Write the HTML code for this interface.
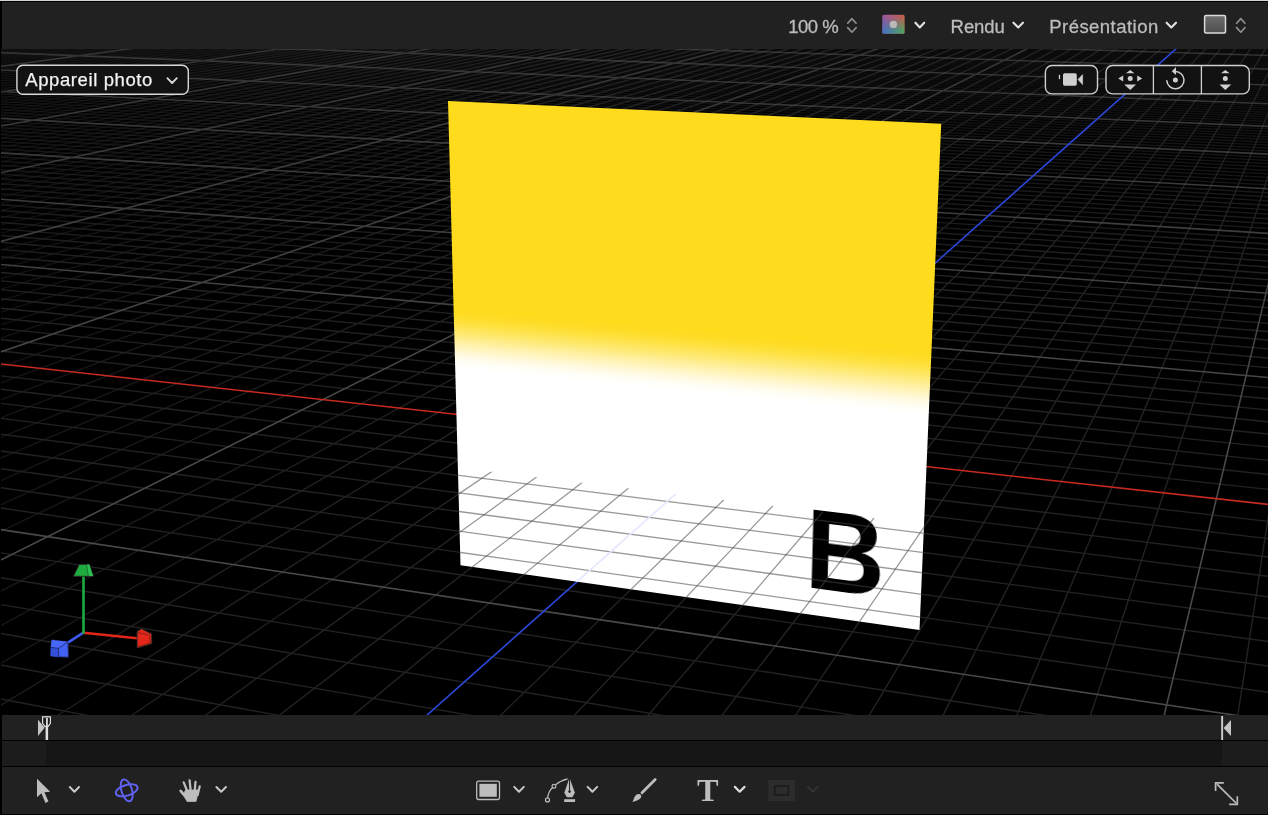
<!DOCTYPE html>
<html><head><meta charset="utf-8">
<style>
html,body{margin:0;padding:0;}
body{width:1269px;height:817px;background:#fff;overflow:hidden;position:relative;font-family:"Liberation Sans",sans-serif;}
#app{position:absolute;left:0;top:0;width:1268px;height:815px;background:#000;overflow:hidden;}
#topline{position:absolute;left:0;top:0;width:1268px;height:1px;background:#d4d4d4;}
#topbar{position:absolute;left:1.5px;top:2px;width:1266.5px;height:47px;background:#212121;}
#canvas{position:absolute;left:1px;top:49px;width:1267px;height:666px;background:#000;overflow:hidden;}
#tl1{position:absolute;left:1.5px;top:715px;width:1266.5px;height:25px;background:#212121;}
#tl2{position:absolute;left:1.5px;top:741px;width:1266.5px;height:25px;background:#1c1c1c;}
#tl2 i{position:absolute;left:44.5px;top:0;width:1176px;height:25px;background:#161616;display:block;}
#tools{position:absolute;left:1.5px;top:767px;width:1266.5px;height:46.5px;background:#212121;}
svg{position:absolute;left:0;top:0;overflow:visible;}
.txt{position:absolute;color:#bdbdbd;font-size:18px;line-height:20px;white-space:nowrap;}
#card{position:absolute;left:0;top:0;width:500px;height:500px;transform-origin:0 0;transform:matrix3d(0.81333388,0.022635884,0,-0.00018387815,0.089620334,1.0077265,0,0.00014032646,0,0,1,0,448,101.1,0,1);
 background:linear-gradient(to bottom,#fedb1c 0,#fedb1c 42.80%,#fedc25 44.38%,#fee13f 46.10%,#fee86c 48.08%,#feed8e 49.40%,#fff2af 50.72%,#fff9dc 52.70%,#fffef6 54.42%,#ffffff 56.00%,#fff 100%);}
#card b{position:absolute;left:382.2px;top:364.6px;font-size:120.6px;line-height:130px;font-weight:bold;color:#000;transform-origin:0 0;transform:scaleX(0.936);}
.btn{position:absolute;box-sizing:border-box;border:1.5px solid #d0d0d0;border-radius:6px;background:#121212;}
</style></head><body>
<div id="app">
<div id="topline"></div>
<div id="topbar"></div>
<div id="canvas">
 <svg width="1267" height="666" viewBox="1 49 1267 666">
  <defs>
   <linearGradient id="fade" x1="0" y1="49" x2="0" y2="715" gradientUnits="userSpaceOnUse">
    <stop offset="0" stop-color="#fff" stop-opacity="0.3"/>
    <stop offset="0.12" stop-color="#fff" stop-opacity="0.55"/>
    <stop offset="0.35" stop-color="#fff" stop-opacity="1"/>
   </linearGradient>
   <mask id="fm" maskUnits="userSpaceOnUse" x="0" y="40" width="1270" height="690"><rect x="0" y="40" width="1270" height="690" fill="url(#fade)"/></mask>
   <linearGradient id="fade2" x1="0" y1="49" x2="0" y2="715" gradientUnits="userSpaceOnUse">
    <stop offset="0" stop-color="#fff" stop-opacity="0.68"/>
    <stop offset="0.55" stop-color="#fff" stop-opacity="1"/>
   </linearGradient>
   <mask id="fm2" maskUnits="userSpaceOnUse" x="0" y="40" width="1270" height="690"><rect x="0" y="40" width="1270" height="690" fill="url(#fade2)"/></mask>
   <linearGradient id="fade3" x1="0" y1="49" x2="700" y2="400" gradientUnits="userSpaceOnUse">
    <stop offset="0" stop-color="#fff" stop-opacity="0.3"/>
    <stop offset="0.35" stop-color="#fff" stop-opacity="0.7"/>
    <stop offset="0.7" stop-color="#fff" stop-opacity="1"/>
   </linearGradient>
   <mask id="fm3" maskUnits="userSpaceOnUse" x="0" y="40" width="1270" height="690"><rect x="0" y="40" width="1270" height="690" fill="url(#fade3)"/></mask>
   <clipPath id="cc"><polygon points="457.9,467.6 924.0,524.0 919.5,630.0 460.5,565.3"/></clipPath>
  </defs>
  <g fill="none" stroke-width="1">
   <g mask="url(#fm)" stroke="#222222" stroke-width="1.4"><path id="gmink" d="M1268.4 46.0L1270.0 46.0M1230.9 46.0L1270.0 47.2M1193.4 46.0L1270.0 48.3M1155.9 46.0L1270.0 49.5M1118.4 46.0L1270.0 50.7M1080.9 46.0L1270.0 51.9M1043.4 46.0L1270.0 53.1M1005.8 46.0L1270.0 54.3M930.7 46.0L1270.0 56.9M893.2 46.0L1270.0 58.2M855.6 46.0L1270.0 59.5M818.0 46.0L1270.0 60.8M780.4 46.0L1270.0 62.1M742.8 46.0L1270.0 63.5M705.2 46.0L1270.0 64.9M667.6 46.0L1270.0 66.3M630.0 46.0L1270.0 67.7M554.7 46.0L1270.0 70.7M517.1 46.0L1270.0 72.2M479.4 46.0L1270.0 73.7M441.8 46.0L1270.0 75.2M404.1 46.0L1270.0 76.8M366.4 46.0L1270.0 78.4M328.7 46.0L1270.0 80.0M291.0 46.0L1270.0 81.7M253.3 46.0L1270.0 83.4M177.8 46.0L1270.0 86.8M140.1 46.0L1270.0 88.6M102.4 46.0L1270.0 90.4M64.6 46.0L1270.0 92.2M26.8 46.0L1270.0 94.1M-2.0 46.3L1270.0 96.0M-2.0 47.8L1270.0 97.9M-2.0 49.4L1270.0 99.9M-2.0 50.9L1270.0 101.9M-2.0 54.1L1270.0 106.0M-2.0 55.7L1270.0 108.1M-2.0 57.4L1270.0 110.2M-2.0 59.1L1270.0 112.4M-2.0 60.8L1270.0 114.6M-2.0 62.5L1270.0 116.9M-2.0 64.3L1270.0 119.2M-2.0 66.2L1270.0 121.6M-2.0 68.0L1270.0 124.0M-2.0 71.9L1270.0 129.0M-2.0 73.9L1270.0 131.6M-2.0 75.9L1270.0 134.2M-2.0 78.0L1270.0 136.9M-2.0 80.1L1270.0 139.6M-2.0 82.2L1270.0 142.4M-2.0 84.4L1270.0 145.2M-2.0 86.7L1270.0 148.1M-2.0 89.0L1270.0 151.1M-2.0 93.8L1270.0 157.3M-2.0 96.2L1270.0 160.5M-2.0 98.7L1270.0 163.7M-2.0 101.3L1270.0 167.0M-2.0 104.0L1270.0 170.5M-2.0 106.7L1270.0 174.0M-2.0 109.4L1270.0 177.5M-2.0 112.3L1270.0 181.2M-2.0 115.2L1270.0 185.0M-2.0 121.2L1270.0 192.8M-2.0 124.4L1270.0 196.8M-2.0 127.6L1270.0 201.0M-2.0 130.9L1270.0 205.3M-2.0 134.3L1270.0 209.7M-2.0 137.8L1270.0 214.2M-2.0 141.4L1270.0 218.8M-2.0 145.0L1270.0 223.6M-2.0 148.8L1270.0 228.5M-2.0 156.8L1270.0 238.7M-2.0 160.9L1270.0 244.1M-2.0 165.2L1270.0 249.6M-2.0 169.5L1270.0 255.3M-2.0 174.1L1270.0 261.1M-2.0 178.8L1270.0 267.2M-2.0 183.6L1270.0 273.4M-2.0 188.6L1270.0 279.9M-2.0 193.7L1270.0 286.5M-2.0 204.5L1270.0 300.5M-2.0 210.2L1270.0 307.9M-2.0 216.1L1270.0 315.5M-2.0 222.3L1270.0 323.5M-2.0 228.6L1270.0 331.7M-2.0 235.2L1270.0 340.2M-2.0 242.0L1270.0 349.0M-2.0 249.1L1270.0 358.2M-2.0 256.5L1270.0 367.8M-2.0 272.2L1270.0 388.1M-2.0 280.6L1270.0 398.9M-2.0 289.3L1270.0 410.1M-2.0 298.4L1270.0 421.9M-2.0 307.9L1270.0 434.2M-2.0 317.9L1270.0 447.1M-2.0 328.3L1270.0 460.6M-2.0 339.2L1270.0 474.7M-2.0 350.7L1270.0 489.6M-2.0 375.5L1270.0 521.6M-2.0 388.9L1270.0 538.9M-2.0 403.0L1270.0 557.2M-2.0 418.0L1270.0 576.5M-2.0 433.8L1270.0 597.0M-2.0 450.6L1270.0 618.7M-2.0 468.4L1270.0 641.7M-2.0 487.4L1270.0 666.3M-2.0 507.6L1270.0 692.5M-2.0 552.4L1061.8 718.0M-2.0 577.3L869.8 718.0M-2.0 604.1L677.7 718.0M-2.0 633.0L485.6 718.0M-2.0 664.4L293.4 718.0M-2.0 698.5L101.2 718.0"/></g>
   <g mask="url(#fm3)" stroke="#232323" stroke-width="1.4"><path id="gmin" d="M17.5 46.0L-2.0 48.4M32.3 46.0L-2.0 50.3M47.0 46.0L-2.0 52.2M61.8 46.0L-2.0 54.1M76.6 46.0L-2.0 56.1M91.3 46.0L-2.0 58.1M106.1 46.0L-2.0 60.2M120.8 46.0L-2.0 62.4M135.6 46.0L-2.0 64.5M165.0 46.0L-2.0 69.1M179.8 46.0L-2.0 71.4M194.5 46.0L-2.0 73.8M209.3 46.0L-2.0 76.3M224.0 46.0L-2.0 78.8M238.8 46.0L-2.0 81.4M253.5 46.0L-2.0 84.1M268.2 46.0L-2.0 86.8M283.0 46.0L-2.0 89.7M312.4 46.0L-2.0 95.5M327.2 46.0L-2.0 98.6M341.9 46.0L-2.0 101.7M356.6 46.0L-2.0 104.9M371.3 46.0L-2.0 108.3M386.1 46.0L-2.0 111.7M400.8 46.0L-2.0 115.2M415.5 46.0L-2.0 118.9M430.2 46.0L-2.0 122.6M459.7 46.0L-2.0 130.5M474.4 46.0L-2.0 134.7M489.1 46.0L-2.0 138.9M503.8 46.0L-2.0 143.3M518.5 46.0L-2.0 147.9M533.2 46.0L-2.0 152.7M547.9 46.0L-2.0 157.6M562.7 46.0L-2.0 162.6M577.4 46.0L-2.0 167.9M606.8 46.0L-2.0 179.1M621.5 46.0L-2.0 185.0M636.2 46.0L-2.0 191.1M650.9 46.0L-2.0 197.5M665.6 46.0L-2.0 204.2M680.3 46.0L-2.0 211.1M695.0 46.0L-2.0 218.4M709.7 46.0L-2.0 225.9M724.4 46.0L-2.0 233.9M753.7 46.0L-2.0 250.9M768.4 46.0L-2.0 260.0M783.1 46.0L-2.0 269.6M797.8 46.0L-2.0 279.6M812.5 46.0L-2.0 290.2M827.2 46.0L-2.0 301.4M841.8 46.0L-2.0 313.2M856.5 46.0L-2.0 325.7M871.2 46.0L-2.0 338.9M900.6 46.0L-2.0 367.9M915.2 46.0L-2.0 383.8M929.9 46.0L-2.0 400.8M944.6 46.0L-2.0 418.9M959.3 46.0L-2.0 438.4M973.9 46.0L-2.0 459.3M988.6 46.0L-2.0 481.8M1003.3 46.0L-2.0 506.2M1017.9 46.0L-2.0 532.6M1047.3 46.0L-2.0 592.7M1061.9 46.0L-2.0 627.1M1076.6 46.0L-2.0 665.0M1091.2 46.0L-2.0 706.9M1105.9 46.0L53.7 718.0M1120.5 46.0L127.7 718.0M1135.2 46.0L201.7 718.0M1149.9 46.0L275.8 718.0M1164.5 46.0L349.8 718.0M1193.8 46.0L497.8 718.0M1208.5 46.0L571.8 718.0M1223.1 46.0L645.8 718.0M1237.7 46.0L719.8 718.0M1252.4 46.0L793.7 718.0M1267.0 46.0L867.7 718.0M1270.0 69.1L941.7 718.0M1270.0 109.0L1015.6 718.0M1270.0 170.3L1089.6 718.0M1270.0 505.2L1237.4 718.0"/></g>
   <g mask="url(#fm2)" stroke="#4a4a4a" stroke-width="1.6"><path id="gmaj" d="M968.3 46.0L1270.0 55.6M592.4 46.0L1270.0 69.2M215.6 46.0L1270.0 85.1M-2.0 52.5L1270.0 103.9M-2.0 69.9L1270.0 126.5M-2.0 91.3L1270.0 154.2M-2.0 118.2L1270.0 188.8M-2.0 152.7L1270.0 233.5M-2.0 199.0L1270.0 293.4M-2.0 264.2L1270.0 377.7M-2.0 529.2L1253.8 718.0M2.8 46.0L-2.0 46.6M150.3 46.0L-2.0 66.8M297.7 46.0L-2.0 92.5M444.9 46.0L-2.0 126.5M592.1 46.0L-2.0 173.4M739.0 46.0L-2.0 242.2M885.9 46.0L-2.0 353.0M1032.6 46.0L-2.0 561.3M1270.0 276.5L1163.5 718.0"/></g>
   <path d="M-2 363.6L1270 504.6" stroke="#c62a20" stroke-width="1.5"/>
   <path d="M1179.2 46.0L423.8 718.0" stroke="#2c46d8" stroke-width="1.6"/>
  </g>
 </svg>
 <div style="position:absolute;left:-1px;top:-49px;width:0;height:0;">
  <div id="card"><b>B</b></div>
 </div>
 <svg width="1267" height="666" viewBox="1 49 1267 666">
  <g fill="none" stroke-width="1.3" clip-path="url(#cc)" stroke="#464646" stroke-opacity="0.55">
   <use href="#gmin"/><use href="#gmink"/>
   <use href="#gmaj"/>
   <path d="M1179.2 46.0L423.8 718.0" stroke="#e4e6ff" stroke-width="1.6" stroke-opacity="1"/>
  </g>
 </svg>
</div>
<div id="tl1"></div>
<div id="tl2"><i></i></div>
<div id="tools"></div>
<svg width="1268" height="815" viewBox="0 0 1268 815" style="position:absolute;left:0;top:0" font-family="Liberation Sans, sans-serif">
<defs>
<linearGradient id="swT" x1="0" y1="0" x2="1" y2="0"><stop offset="0" stop-color="#97589f"/><stop offset="1" stop-color="#c4604a"/></linearGradient>
<linearGradient id="swB" x1="0" y1="0" x2="1" y2="0"><stop offset="0" stop-color="#4070c4"/><stop offset="1" stop-color="#4ba85e"/></linearGradient>
<linearGradient id="swM" x1="0" y1="0" x2="0" y2="1"><stop offset="0.1" stop-color="#fff" stop-opacity="0"/><stop offset="0.9" stop-color="#fff" stop-opacity="1"/></linearGradient>
<mask id="swMask" maskContentUnits="objectBoundingBox"><rect x="0" y="0" width="1" height="1" fill="url(#swM)"/></mask>
<linearGradient id="sqG" x1="0" y1="0" x2="0" y2="1"><stop offset="0" stop-color="#6e6e6e"/><stop offset="1" stop-color="#4e4e4e"/></linearGradient>
</defs>
<text x="788.2" y="32.8" font-size="18.5" fill="#bcbcbc" stroke="#bcbcbc" stroke-width="0.3" textLength="50.6" lengthAdjust="spacing">100 %</text>
<polyline points="847.70,23.20 851.90,18.60 856.10,23.20" fill="none" stroke="#8e8e8e" stroke-width="1.70" stroke-linecap="round" stroke-linejoin="round"/><polyline points="847.70,27.60 851.90,32.20 856.10,27.60" fill="none" stroke="#8e8e8e" stroke-width="1.70" stroke-linecap="round" stroke-linejoin="round"/>
<rect x="882.3" y="14.8" width="22.3" height="19" rx="1.5" fill="url(#swT)"/>
<rect x="882.3" y="14.8" width="22.3" height="19" rx="1.5" fill="url(#swB)" mask="url(#swMask)"/>
<circle cx="893.4" cy="24.4" r="3.7" fill="#b9b9b9"/>
<polyline points="915.40,22.70 919.80,27.50 924.20,22.70" fill="none" stroke="#e2e2e2" stroke-width="2.10" stroke-linecap="round" stroke-linejoin="round"/>
<text x="950.6" y="32.8" font-size="18.5" fill="#bcbcbc" stroke="#bcbcbc" stroke-width="0.3" textLength="54.2" lengthAdjust="spacing">Rendu</text>
<polyline points="1013.50,22.70 1018.20,27.50 1022.90,22.70" fill="none" stroke="#e2e2e2" stroke-width="2.10" stroke-linecap="round" stroke-linejoin="round"/>
<text x="1049.2" y="32.8" font-size="18.5" fill="#bcbcbc" stroke="#bcbcbc" stroke-width="0.3" textLength="109" lengthAdjust="spacing">Présentation</text>
<polyline points="1166.60,22.70 1171.30,27.50 1176.00,22.70" fill="none" stroke="#e2e2e2" stroke-width="2.10" stroke-linecap="round" stroke-linejoin="round"/>
<rect x="1204.6" y="15.4" width="20.9" height="17.6" rx="1.5" fill="url(#sqG)" stroke="#dcdcdc" stroke-width="1.5"/>
<polyline points="1236.60,23.20 1240.80,18.60 1245.00,23.20" fill="none" stroke="#8e8e8e" stroke-width="1.70" stroke-linecap="round" stroke-linejoin="round"/><polyline points="1236.60,27.60 1240.80,32.20 1245.00,27.60" fill="none" stroke="#8e8e8e" stroke-width="1.70" stroke-linecap="round" stroke-linejoin="round"/>
<rect x="16.9" y="65.2" width="171.4" height="29" rx="6" fill="#121212" stroke="#d8d8d8" stroke-width="1.4"/>
<text x="25.2" y="85.5" font-size="18.5" fill="#f2f2f2" stroke="#f2f2f2" stroke-width="0.25" textLength="127.2" lengthAdjust="spacing">Appareil photo</text>
<polyline points="167.40,78.20 172.10,83.00 176.80,78.20" fill="none" stroke="#d6d6d6" stroke-width="1.90" stroke-linecap="round" stroke-linejoin="round"/>
<rect x="1045.4" y="65.5" width="52.1" height="28.4" rx="6.5" fill="#121212" stroke="#d0d0d0" stroke-width="1.4"/>
<rect x="1106" y="65.5" width="143.3" height="28.4" rx="6.5" fill="#121212" stroke="#d0d0d0" stroke-width="1.4"/>
<path d="M1153.4 65.5V93.9M1201.4 65.5V93.9" stroke="#d0d0d0" stroke-width="1.3"/>
<rect x="1063" y="73.3" width="13.8" height="12.4" rx="1.6" fill="#cfcfcf"/>
<path d="M1078 79.5L1082.6 74.6V84.6Z" fill="#cfcfcf" stroke="#cfcfcf" stroke-width="0.6" stroke-linejoin="round"/>
<rect x="1058.8" y="74.8" width="1.3" height="4.3" fill="#cfcfcf"/>
<circle cx="1130.2" cy="78.6" r="2.5" fill="#cfcfcf"/>
<path d="M1118.2 78.6l5 -3v6zM1142.2 78.6l-5 -3v6zM1130.2 70.0l4.3 3.2h-8.6zM1130.2 90.0l5.9 -5.6h-11.8z" fill="#cfcfcf"/>
<circle cx="1175.4" cy="80.1" r="2.5" fill="#cfcfcf"/>
<path d="M1175.40 71.50A8.6 8.6 0 1 1 1166.83 80.85" fill="none" stroke="#cfcfcf" stroke-width="1.5" stroke-linecap="round"/>
<path d="M1171.8 71.2l4.2 -4.2v8.0z" fill="#cfcfcf"/>
<circle cx="1225.3" cy="78.6" r="2.5" fill="#cfcfcf"/>
<path d="M1225.3 70.0l4.3 3.2h-8.6zM1225.3 90.0l5.9 -5.6h-11.8z" fill="#cfcfcf"/>
<g stroke-linecap="round">
<path d="M83.4 632.7L67.5 642.8" stroke="#3f5af2" stroke-width="2.6"/>
<path d="M83.4 632.7L137 638.2" stroke="#e2271a" stroke-width="2.4"/>
<path d="M83.5 632.7V576.5" stroke="#1eab3e" stroke-width="2.6"/>
</g>
<path d="M79.3 564.4H89.4L93.4 576.3H73.4Z" fill="#1fab3f" stroke="#2a2a2a" stroke-width="0.9" stroke-linejoin="round"/>
<path d="M86.8 564.6L89.3 564.6L93 576H88.6Z" fill="#2cc253"/>
<path d="M86.6 564.6L88.4 576.2" stroke="#1a5a2a" stroke-width="0.7"/>
<path d="M137 631.6L141.6 628.8L151.6 634L151.8 643.6L137.2 648Z" fill="#e2271a" stroke="#2a2a2a" stroke-width="0.9" stroke-linejoin="round"/>
<path d="M137.2 632.4L149.6 635.2L150 643L137.4 647" fill="none" stroke="#7a1a12" stroke-width="0.8"/>
<path d="M51.7 639.9L67.9 641.8L68.5 657.2L58.6 656.9L50.6 656.1L50.9 647.3Z" fill="#4262f5" stroke="#20245a" stroke-width="0.9" stroke-linejoin="round"/>
<path d="M51.7 639.9L67.9 641.8L58.6 648.4L50.9 647.3Z" fill="#4767fa"/>
<path d="M50.9 647.3L58.6 648.4V656.9L50.6 656.1Z" fill="#3450d8"/>
<path d="M50.9 647.3L58.6 648.4L67.9 641.8M58.6 648.4V656.9" fill="none" stroke="#1f2a6a" stroke-width="0.9"/>
<path d="M38 719.6V736L44.6 727.8Z" fill="#c4c4c4"/>
<rect x="45.6" y="716.4" width="2.5" height="23.6" fill="#e0e0e0"/>
<path d="M42.6 716.9H50.4V723.4L48.2 726.4H44.8L42.6 723.4Z" fill="#1a1a1a" stroke="#e0e0e0" stroke-width="1.2"/>
<rect x="46" y="718" width="1.8" height="22" fill="#e0e0e0"/>
<rect x="1221.2" y="716" width="1.9" height="24" fill="#cfcfcf"/>
<path d="M1231 720V736L1223.6 728Z" fill="#c4c4c4"/>
<path d="M37 778.7V797.2L41.4 793.2L45.4 802.9L48.5 801.5L44.4 792.3L50.2 791.7Z" fill="#bdbdbd"/>
<polyline points="69.80,787.00 74.40,791.80 79.00,787.00" fill="none" stroke="#c8c8c8" stroke-width="2.00" stroke-linecap="round" stroke-linejoin="round"/>
<g fill="none" stroke="#6262f2" stroke-width="1.9" transform="translate(126.7 790.3) rotate(-17)"><ellipse rx="11.3" ry="5.3"/><ellipse rx="5.3" ry="11.3"/></g>
<g stroke="#bdbdbd" stroke-linecap="round" stroke-width="2.3" fill="none"><path d="M183.7 782.4L187.6 792M189.6 780.3L190.8 792M195.5 782L194.6 792M199.7 786.3L197.6 795"/><path d="M180.7 790.9L186.6 798" stroke-width="2.7"/></g>
<path d="M185.6 790H198.8L196 801.4H187L183.4 794.6Z" fill="#bdbdbd" stroke="#bdbdbd" stroke-width="0.8" stroke-linejoin="round"/>
<polyline points="216.40,787.00 221.20,791.80 226.00,787.00" fill="none" stroke="#c8c8c8" stroke-width="2.00" stroke-linecap="round" stroke-linejoin="round"/>
<rect x="476.7" y="781.1" width="22.8" height="18.4" rx="2" fill="none" stroke="#bdbdbd" stroke-width="1.3"/>
<rect x="479.4" y="783.8" width="17.4" height="13" fill="#bdbdbd"/>
<polyline points="514.20,786.90 519.00,791.70 523.80,786.90" fill="none" stroke="#c8c8c8" stroke-width="2.00" stroke-linecap="round" stroke-linejoin="round"/>
<path d="M547.5 797.6C548.6 792.6 550.6 788.8 552.8 787.4M555.6 784.9C558.6 782.2 563 780 567.6 778.9" fill="none" stroke="#bdbdbd" stroke-width="1.2"/>
<circle cx="547.5" cy="799.9" r="2" fill="none" stroke="#bdbdbd" stroke-width="1.2"/>
<circle cx="554" cy="786.2" r="1.9" fill="none" stroke="#bdbdbd" stroke-width="1.2"/>
<path d="M569.5 777.8L574.9 792.8L572.3 797.2H566.9L564.3 792.8Z" fill="#bdbdbd"/>
<path d="M569.55 778V790.6" stroke="#212121" stroke-width="1"/><circle cx="569.55" cy="791.6" r="1.3" fill="#212121"/>
<rect x="564.2" y="799.2" width="10.9" height="2.8" fill="#bdbdbd"/>
<polyline points="587.60,786.90 592.40,791.70 597.20,786.90" fill="none" stroke="#c8c8c8" stroke-width="2.00" stroke-linecap="round" stroke-linejoin="round"/>
<path d="M655.2 779.4L642 792.8" stroke="#bdbdbd" stroke-width="2.8" stroke-linecap="round"/>
<path d="M632.4 802C634 799 634.6 796 636.6 794.6C638.6 793.4 640.6 793.8 641.2 795.6C641.8 797.6 640 799.4 637.6 800.2C635.8 800.8 634 801.4 632.4 802Z" fill="#bdbdbd"/>
<text x="696.9" y="801" font-family="Liberation Serif, serif" font-weight="bold" font-size="31.5" fill="#bdbdbd" textLength="21.6" lengthAdjust="spacingAndGlyphs">T</text>
<polyline points="734.90,786.90 739.70,791.70 744.50,786.90" fill="none" stroke="#dcdcdc" stroke-width="2.20" stroke-linecap="round" stroke-linejoin="round"/>
<rect x="768.1" y="779.9" width="27" height="21.1" fill="#2c2c2c"/>
<rect x="774.8" y="785.9" width="13.6" height="9" fill="none" stroke="#1b1b1b" stroke-width="1.6"/>
<polyline points="807.90,786.90 812.70,791.70 817.50,786.90" fill="none" stroke="#343434" stroke-width="2.00" stroke-linecap="round" stroke-linejoin="round"/>
<g fill="none" stroke="#bdbdbd" stroke-width="1.7"><path d="M1217 784.2L1236 803"/><path d="M1215.6 791V782.8H1223.8" /><path d="M1237.3 796.2V804.3H1229.2"/></g>
</svg>
</div>
</body></html>
